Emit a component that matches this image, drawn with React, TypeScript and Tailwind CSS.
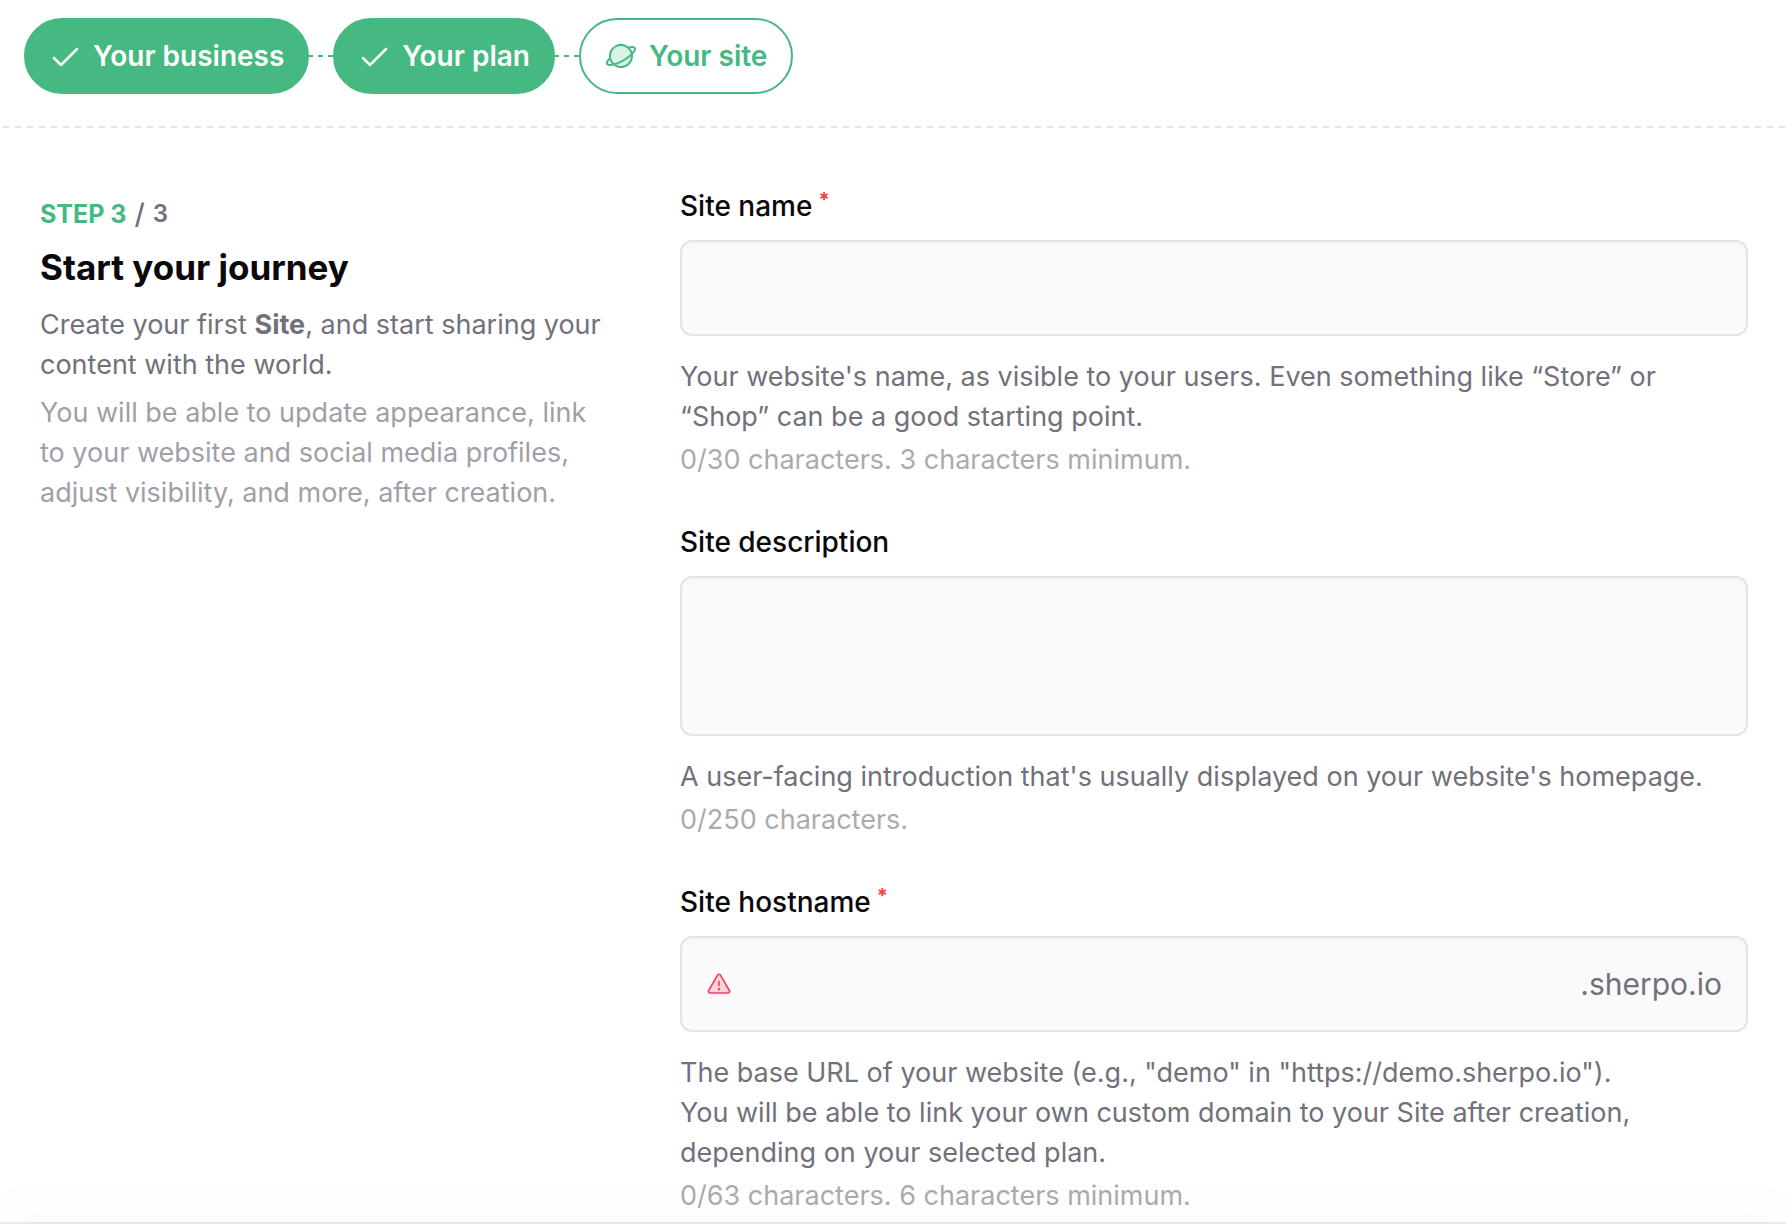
import { Fragment, type ReactNode } from "react";
import { PiCheck, PiPlanetDuotone, PiWarningDuotone } from "react-icons/pi";

const steps = [
  { label: "Your business", done: true },
  { label: "Your plan", done: true },
  { label: "Your site", done: false },
];

const controlClass =
  "block w-full rounded-xl border-2 border-[#e4e4e4] bg-[#fafafa] px-6 text-[30px] text-zinc-950 shadow-[inset_0_3px_4px_rgba(0,0,0,0.015)] outline-none focus:border-[#46b882]";

type FieldProps = {
  id: string;
  label: string;
  required?: boolean;
  help: ReactNode;
  counter: string;
  children: ReactNode;
};

function Field({ id, label, required, help, counter, children }: FieldProps) {
  return (
    <div className="flex flex-col">
      <label htmlFor={id} className="mb-[14px] flex gap-1.5 text-[28px] font-medium text-zinc-950">
        {label}
        {required && <span className="text-xl leading-7 font-bold text-[#ef4444]">*</span>}
      </label>
      {children}
      <p className="mt-[21px] text-zinc-500">{help}</p>
      <p className="mt-[3px] text-[#ababae]">{counter}</p>
    </div>
  );
}

export default function App() {
  return (
    <div className="flex min-h-screen flex-col bg-white font-['Inter',sans-serif] text-[27px] leading-10 antialiased">
      <header>
        <nav className="flex items-center px-6 pt-[18px] pb-8">
          {steps.map((step, index) => (
            <Fragment key={step.label}>
              {index > 0 && (
                <span className="h-0.5 w-6 bg-[repeating-linear-gradient(to_right,#46b882_0_4px,transparent_4px_9px,#46b882_9px_10px)]" />
              )}
              <button
                type="button"
                className={
                  step.done
                    ? "flex h-[76px] items-center gap-3 rounded-full border-2 border-[#46b882] bg-[#46b882] px-[23px] text-[28px] font-semibold text-white"
                    : "flex h-[76px] items-center gap-3 rounded-full border-2 border-[#46b882] bg-white px-6 text-[28px] font-semibold text-[#46b882]"
                }
              >
                {step.done ? <PiCheck size={32} strokeWidth={6} /> : <PiPlanetDuotone size={32} />}
                {step.label}
              </button>
            </Fragment>
          ))}
        </nav>
        <div className="h-0.5 bg-[repeating-linear-gradient(to_right,transparent_0_3px,#e4e4e4_3px_9px,transparent_9px_12px)]" />
      </header>

      <main className="flex gap-16 pt-[58px] pr-[38px] pb-1.5 pl-10">
        <section className="w-[576px] shrink-0 pt-2">
          <p className="flex items-center gap-2 text-2xl leading-10 font-semibold text-zinc-500">
            <span className="text-[25px] font-bold text-[#46b882]">STEP 3</span>
            <span className="text-[28px] font-medium">/</span>
            <span>3</span>
          </p>
          <h1 className="mt-[9px] text-[35px] leading-12 font-bold text-zinc-950">Start your journey</h1>
          <p className="mt-[14px] text-zinc-500">
            Create your first <strong className="font-bold">Site</strong>, and start sharing your content with the world.
          </p>
          <p className="mt-2 text-zinc-400">
            You will be able to update appearance, link to your website and social media profiles, adjust visibility,
            and more, after creation.
          </p>
        </section>

        <form className="flex min-w-0 flex-1 flex-col gap-[42px]">
          <Field
            id="site-name"
            label="Site name"
            required
            help="Your website's name, as visible to your users. Even something like “Store” or “Shop” can be a good starting point."
            counter="0/30 characters. 3 characters minimum."
          >
            <input id="site-name" type="text" maxLength={30} className={`${controlClass} h-24`} />
          </Field>

          <Field
            id="site-description"
            label="Site description"
            help="A user-facing introduction that's usually displayed on your website's homepage."
            counter="0/250 characters."
          >
            <textarea id="site-description" maxLength={250} className={`${controlClass} h-40 resize-none py-5`} />
          </Field>

          <Field
            id="site-hostname"
            label="Site hostname"
            required
            help={
              <>
                The base URL of your website (e.g., "demo" in "https://demo.sherpo.io").
                <br />
                You will be able to link your own custom domain to your Site after creation, depending on your selected
                plan.
              </>
            }
            counter="0/63 characters. 6 characters minimum."
          >
            <div className={`${controlClass} flex h-24 items-center gap-4`}>
              <PiWarningDuotone size={26} className="shrink-0 text-[#f43f5e]" />
              <input id="site-hostname" type="text" maxLength={63} className="min-w-0 flex-1 outline-none" />
              <span className="text-zinc-500">.sherpo.io</span>
            </div>
          </Field>
        </form>
      </main>

      <footer className="sticky bottom-0 mt-auto border-t-2 border-[#e8e8e8] bg-white shadow-[0_0_60px_16px_rgba(0,0,0,0.02)]" />
    </div>
  );
}
